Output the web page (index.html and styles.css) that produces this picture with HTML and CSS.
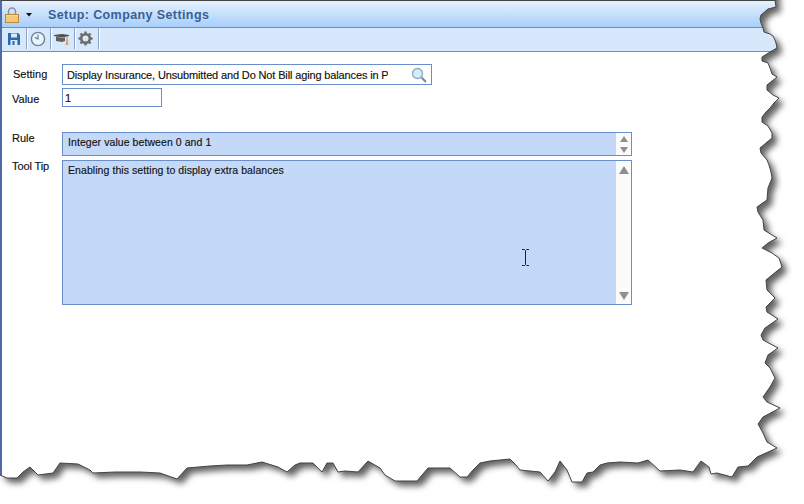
FILE: index.html
```html
<!DOCTYPE html>
<html lang="en">
<head>
<meta charset="utf-8">
<title>Setup: Company Settings</title>
<link rel="stylesheet" href="styles.css">
</head>
<body>
<div class="window">
  <header class="titlebar">
    <svg class="lock" width="16" height="18" viewBox="0 0 16 18">
      <path d="M4.500 9V5.500a3.500 3.500 0 0 1 7 0V9" fill="none" stroke="#8f8f8f" stroke-width="1.400"/>
      <rect x="1.500" y="8.500" width="13" height="8" fill="#fbd98c" stroke="#b98a3c"/>
      <path d="M2 11h12M2 13h12M2 15h12" stroke="#f0b860" stroke-width="1"/>
    </svg>
    <svg class="caret" width="6" height="4" viewBox="0 0 6 4"><path d="M0 0h6L3 3.500z" fill="#111"/></svg>
    <h1 class="title">Setup: Company Settings</h1>
  </header>
  <nav class="toolbar">
    <div class="tool">
      <svg width="14" height="14" viewBox="0 0 14 14">
        <path d="M1 1h10l2 2v10H1z" fill="#2f6aa8"/>
        <rect x="4" y="1.500" width="6" height="4" fill="#d7e8fd"/>
        <rect x="3.500" y="8" width="7" height="5" fill="#d7e8fd"/>
        <rect x="5.500" y="9" width="2" height="4" fill="#2f6aa8"/>
      </svg>
    </div>
    <div class="tool">
      <svg width="16" height="16" viewBox="0 0 16 16">
        <circle cx="8" cy="8" r="6.600" fill="#eef4fc" stroke="#6f8296" stroke-width="1.400"/>
        <path d="M8 3.500V8l-3.200-1.600" fill="none" stroke="#4d86b8" stroke-width="1.200"/>
      </svg>
    </div>
    <div class="tool">
      <svg class="cap" width="15" height="12" viewBox="0 0 15 12">
        <path d="M0 1 8 0l7 1v1L8 3.500 0 2z" fill="#4f4f4f"/>
        <path d="M2 2.500 8 4l3-.8V7L8 8 2 7z" fill="#5f5f5f"/>
        <path d="M13 2v5" stroke="#999" stroke-width="1"/>
        <path d="M12.500 6h1.200l.8 5h-3z" fill="#ee9a55"/>
      </svg>
    </div>
    <div class="tool">
      <svg width="15" height="15" viewBox="0 0 15 15">
        <circle cx="7.500" cy="7.500" r="4.300" fill="none" stroke="#6c6c6c" stroke-width="2.600"/>
        <path d="M7.500.5v3M7.500 11.500v3M.5 7.500h3M11.500 7.500h3M2.500 2.500l2.100 2.100M10.400 10.400l2.100 2.100M12.500 2.500l-2.100 2.100M4.600 10.400l-2.100 2.100" stroke="#6c6c6c" stroke-width="2.400"/>
      </svg>
    </div>
  </nav>
  <main class="form">
    <div class="row row-setting">
      <label class="label label-setting">Setting</label>
      <div class="field field-setting">
        <span class="field-text">Display Insurance, Unsubmitted and Do Not Bill aging balances in Patient Statements</span>
        <svg class="search" width="16" height="16" viewBox="0 0 16 16">
          <circle cx="6.500" cy="6.500" r="5" fill="#d6ecfa" stroke="#8fa9bf" stroke-width="1.300"/>
          <path d="M10.500 10.500 15 15" stroke="#6f8ba3" stroke-width="2"/>
        </svg>
      </div>
    </div>
    <div class="row row-value">
      <label class="label label-value">Value</label>
      <div class="field field-value">1</div>
    </div>
    <div class="row row-rule">
      <label class="label label-top">Rule</label>
      <div class="box box-rule">
        <div class="box-text">Integer value between 0 and 1</div>
        <div class="scroll scroll-small">
          <span class="arrow up small"></span>
          <span class="arrow down small"></span>
        </div>
      </div>
    </div>
    <div class="row row-tip">
      <label class="label label-tip">Tool Tip</label>
      <div class="box box-tip">
        <div class="box-text">Enabling this setting to display extra balances</div>
        <div class="scroll">
          <span class="arrow up"></span>
          <span class="arrow down"></span>
        </div>
      </div>
    </div>
  </main>
  <svg class="ibeam" width="9" height="17" viewBox="0 0 9 17">
    <path d="M1 .5h2.500l1 1 1-1H8M4.500 1.500v14M1 16.500h2.500l1-1 1 1H8" fill="none" stroke="#222" stroke-width="1"/>
  </svg>
  <svg class="torn" width="804" height="504" viewBox="0 0 804 504">
    <defs>
      <filter id="blur" x="-5%" y="-5%" width="110%" height="110%"><feGaussianBlur stdDeviation="3"/></filter>
      <clipPath id="outside"><path d="M775 0 776 7 768 9 761 15 760 19 761 23 763 28 764 32 770 34 773 36 775 40 776 43 777 48 770 52 762 57 762 61 768 63 770 68 772 74 777 77 772 81 767 85 767 90 773 95 779 98 774 103 770 108 766 112 762 117 762 122 768 126 772 133 772 138 766 143 760 148 761 153 767 160 769 165 771 172 772 178 768 188 767 200 757 207 758 212 763 220 764 230 772 235 777 238 768 243 762 248 772 253 779 258 782 267 772 275 766 280 767 290 775 298 766 307 767 312 778 319 765 328 761 335 763 340 778 348 768 355 765 363 770 368 775 378 770 387 763 397 767 402 780 408 763 417 758 424 763 433 767 442 777 448 757 457 748 466 738 467 732 477 717 473 711 474 709 467 701 461 693 472 680 470 660 471 648 460 638 463 620 462 607 463 600 465 593 472 587 473 582 482 572 482 567 470 560 461 555 472 548 481 540 472 520 470 515 464 510 459 490 461 480 463 473 470 467 477 460 477 450 468 428 468 417 481 395 481 385 475 380 468 368 461 358 472 345 471 338 472 333 463 327 463 322 472 313 463 300 463 295 465 287 472 278 467 262 462 247 465 227 465 210 466 187 468 177 479 160 473 140 472 115 472 93 473 90 470 78 464 60 463 53 473 38 475 30 467 23 472 17 478 7 478 0 475V504H804V0Z"/></clipPath>
    </defs>
    <path fill="#fff" d="M775 0 776 7 768 9 761 15 760 19 761 23 763 28 764 32 770 34 773 36 775 40 776 43 777 48 770 52 762 57 762 61 768 63 770 68 772 74 777 77 772 81 767 85 767 90 773 95 779 98 774 103 770 108 766 112 762 117 762 122 768 126 772 133 772 138 766 143 760 148 761 153 767 160 769 165 771 172 772 178 768 188 767 200 757 207 758 212 763 220 764 230 772 235 777 238 768 243 762 248 772 253 779 258 782 267 772 275 766 280 767 290 775 298 766 307 767 312 778 319 765 328 761 335 763 340 778 348 768 355 765 363 770 368 775 378 770 387 763 397 767 402 780 408 763 417 758 424 763 433 767 442 777 448 757 457 748 466 738 467 732 477 717 473 711 474 709 467 701 461 693 472 680 470 660 471 648 460 638 463 620 462 607 463 600 465 593 472 587 473 582 482 572 482 567 470 560 461 555 472 548 481 540 472 520 470 515 464 510 459 490 461 480 463 473 470 467 477 460 477 450 468 428 468 417 481 395 481 385 475 380 468 368 461 358 472 345 471 338 472 333 463 327 463 322 472 313 463 300 463 295 465 287 472 278 467 262 462 247 465 227 465 210 466 187 468 177 479 160 473 140 472 115 472 93 473 90 470 78 464 60 463 53 473 38 475 30 467 23 472 17 478 7 478 0 475V504H804V0Z"/>
    <g clip-path="url(#outside)">
      <path class="torn-shadow" filter="url(#blur)" transform="translate(5 5)" d="M775 0 776 7 768 9 761 15 760 19 761 23 763 28 764 32 770 34 773 36 775 40 776 43 777 48 770 52 762 57 762 61 768 63 770 68 772 74 777 77 772 81 767 85 767 90 773 95 779 98 774 103 770 108 766 112 762 117 762 122 768 126 772 133 772 138 766 143 760 148 761 153 767 160 769 165 771 172 772 178 768 188 767 200 757 207 758 212 763 220 764 230 772 235 777 238 768 243 762 248 772 253 779 258 782 267 772 275 766 280 767 290 775 298 766 307 767 312 778 319 765 328 761 335 763 340 778 348 768 355 765 363 770 368 775 378 770 387 763 397 767 402 780 408 763 417 758 424 763 433 767 442 777 448 757 457 748 466 738 467 732 477 717 473 711 474 709 467 701 461 693 472 680 470 660 471 648 460 638 463 620 462 607 463 600 465 593 472 587 473 582 482 572 482 567 470 560 461 555 472 548 481 540 472 520 470 515 464 510 459 490 461 480 463 473 470 467 477 460 477 450 468 428 468 417 481 395 481 385 475 380 468 368 461 358 472 345 471 338 472 333 463 327 463 322 472 313 463 300 463 295 465 287 472 278 467 262 462 247 465 227 465 210 466 187 468 177 479 160 473 140 472 115 472 93 473 90 470 78 464 60 463 53 473 38 475 30 467 23 472 17 478 7 478 0 475V-20H775Z"/>
    </g>
    <path class="torn-edge" d="M775 0 776 7 768 9 761 15 760 19 761 23 763 28 764 32 770 34 773 36 775 40 776 43 777 48 770 52 762 57 762 61 768 63 770 68 772 74 777 77 772 81 767 85 767 90 773 95 779 98 774 103 770 108 766 112 762 117 762 122 768 126 772 133 772 138 766 143 760 148 761 153 767 160 769 165 771 172 772 178 768 188 767 200 757 207 758 212 763 220 764 230 772 235 777 238 768 243 762 248 772 253 779 258 782 267 772 275 766 280 767 290 775 298 766 307 767 312 778 319 765 328 761 335 763 340 778 348 768 355 765 363 770 368 775 378 770 387 763 397 767 402 780 408 763 417 758 424 763 433 767 442 777 448 757 457 748 466 738 467 732 477 717 473 711 474 709 467 701 461 693 472 680 470 660 471 648 460 638 463 620 462 607 463 600 465 593 472 587 473 582 482 572 482 567 470 560 461 555 472 548 481 540 472 520 470 515 464 510 459 490 461 480 463 473 470 467 477 460 477 450 468 428 468 417 481 395 481 385 475 380 468 368 461 358 472 345 471 338 472 333 463 327 463 322 472 313 463 300 463 295 465 287 472 278 467 262 462 247 465 227 465 210 466 187 468 177 479 160 473 140 472 115 472 93 473 90 470 78 464 60 463 53 473 38 475 30 467 23 472 17 478 7 478 0 475"/>
  </svg>
</div>
</body>
</html>
```
FILE: styles.css
```css
* { box-sizing: border-box; }
html, body { margin: 0; padding: 0; background: #fff; }
body { width: 804px; height: 504px; overflow: hidden; font-family: "Liberation Sans", Arial, sans-serif; font-size: 11px; color: #111; -webkit-text-stroke: 0.15px #111; }
.window { position: relative; width: 804px; height: 504px; border-top: 1px solid #444; border-left: 2px solid #4f6aa5; }

.titlebar { display: flex; align-items: center; height: 27px; padding-left: 2px; border-bottom: 1px solid #6a8ecb; background: linear-gradient(#e6f1fe, #a8cefa); }
.lock { flex: none; margin-top: 1px; }
.caret { flex: none; margin-left: 6px; margin-top: 1px; }
.title { margin: 2px 0 0 16px; font-size: 12.5px; font-weight: bold; letter-spacing: 0.4px; color: #3a5f94; -webkit-text-stroke: 0; }

.toolbar { display: flex; height: 24px; padding: 0 0 2px 1px; border-bottom: 1px solid #6a8ecb; background: #d7e8fd; }
.tool { display: flex; align-items: center; justify-content: center; width: 24px; padding-right: 2px; border-right: 1px solid #8aa3c4; box-shadow: 1px 0 0 #fff; }
.tool svg { display: block; }
.cap { margin-top: 3px; }

.form { display: flex; flex-direction: column; padding: 12px 0 0 10px; }
.row { display: flex; }
.label { flex: none; width: 50px; line-height: 14px; }
.row-value { margin-top: 3px; align-items: center; }
.row-rule { margin-top: 25px; }
.row-tip { margin-top: 4px; }
.label-setting { margin-left: 1px; width: 49px; margin-top: 3px; }
.label-value { margin-top: 2px; }
.label-top { margin-top: -1px; }
.label-tip { margin-top: -1px; letter-spacing: -0.1px; }

.field { border: 1px solid #6a8ecb; background: #fff; }
.field-setting { display: flex; align-items: center; width: 370px; height: 21px; padding-left: 4px; }
.field-text { flex: none; width: 321px; overflow: hidden; white-space: nowrap; letter-spacing: -0.14px; }
.search { flex: none; margin-left: 23px; }
.field-value { width: 100px; height: 19px; padding-left: 2px; line-height: 19px; }

.box { display: flex; width: 570px; border: 1px solid #6a8ecb; background: #c3d9f7; }
.box-rule { height: 24px; }
.box-tip { height: 145px; }
.box-text { flex: 1; padding: 2px 0 0 5px; line-height: 14px; font-size: 10.5px; letter-spacing: 0.07px; }
.scroll { flex: none; display: flex; flex-direction: column; justify-content: space-between; align-items: center; width: 15px; padding: 5px 0 4px; background: #fbfbfb; }
.scroll-small { padding: 3px 0 2px; }
.arrow { display: block; width: 0; height: 0; border-left: 5px solid transparent; border-right: 5px solid transparent; }
.arrow.up { border-bottom: 8px solid #8f8f8f; }
.arrow.down { border-top: 8px solid #8f8f8f; }
.arrow.small { border-left-width: 4px; border-right-width: 4px; }
.arrow.up.small { border-bottom-width: 6px; }
.arrow.down.small { border-top-width: 6px; }

.ibeam { position: absolute; left: 519px; top: 248px; }
.torn { position: absolute; left: -2px; top: -1px; display: block; }
.torn-shadow { fill: #000; fill-opacity: 0.62; }
.torn-edge { fill: none; stroke: #444; stroke-width: 1; }
```
